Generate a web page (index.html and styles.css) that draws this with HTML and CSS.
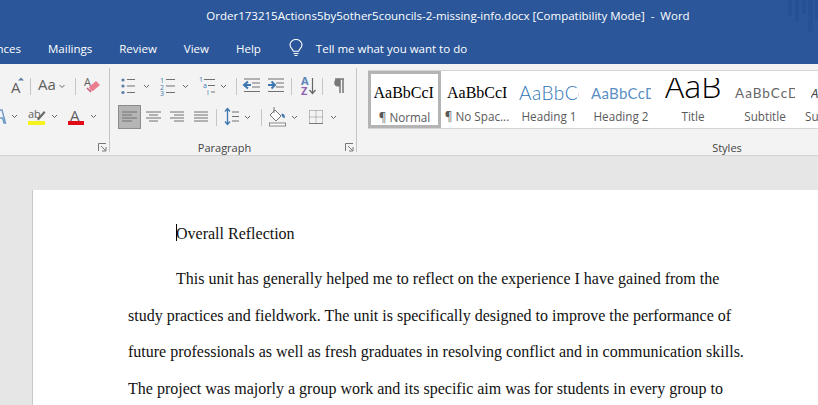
FILE: index.html
```html
<!DOCTYPE html>
<html lang="en">
<head>
<meta charset="utf-8">
<title>Word</title>
<link rel="stylesheet" href="styles.css">
</head>
<body>
<header class="titlebar">
  <div class="doc-title">Order173215Actions5by5other5councils-2-missing-info.docx [Compatibility Mode]&nbsp; - &nbsp;Word</div>
  <svg class="decor" width="30" height="34" viewBox="0 0 30 34"><g fill="#1f4a88" opacity=".35"><rect x="0" y="0" width="4" height="16"/><rect x="7" y="0" width="4" height="22"/><rect x="14" y="0" width="4" height="14"/><rect x="20" y="0" width="5" height="32"/><rect x="27" y="0" width="3" height="20"/></g></svg>
</header>
<nav class="tabs">
  <span class="tab tab-clipped"><span>References</span></span>
  <span class="tab">Mailings</span>
  <span class="tab">Review</span>
  <span class="tab">View</span>
  <span class="tab">Help</span>
  <span class="tell">
    <svg width="14" height="18" viewBox="0 0 14 18" fill="none" stroke="#fff" stroke-width="1.1"><path d="M4.2 12.2C4 9.8 1 9 1 5.8a6 5.3 0 0 1 12 0c0 3.200-3 4-3.200 6.400z"/><path d="M4.500 14.500h5M5.500 16.500h3"/></svg>
    <span>Tell me what you want to do</span>
  </span>
</nav>
<section class="ribbon">
  <div class="group group-font">
    <div class="rows">
      <div class="row">
        <svg class="tool" width="30" height="24" viewBox="0 0 30 24"><text x="11" y="19" class="ico-a" font-size="15">A</text><path d="M18 6.500l3-3 3 3z" fill="#5b7fa6"/></svg>
        <i class="sep"></i>
        <svg class="tool" width="44" height="24" viewBox="0 0 44 24"><text x="7" y="16" class="ico-a" font-size="15">Aa</text><path d="M28.500 11l2.500 2.500 2.500-2.500" class="chev"/></svg>
        <i class="sep"></i>
        <svg class="tool" width="33" height="24" viewBox="0 0 33 24"><text x="8" y="12" class="ico-a" font-size="11">A</text><path d="M13 13l7-6 4 4-7 6-2.500-.5z" fill="#ea7d90"/><path d="M11 14l4 4" stroke="#c9596e" stroke-width="1.500"/></svg>
      </div>
      <div class="row">
        <svg class="tool" width="22" height="24" viewBox="0 0 22 24"><path d="M0 5h2l3.500 13H4L2.500 13H-1" fill="none" stroke="#6f9ac8" stroke-width="1.400"/><path d="M12 10l2.500 2.500 2.500-2.500" class="chev"/></svg>
        <svg class="tool" width="40" height="24" viewBox="0 0 40 24"><text x="6" y="13" class="ico-a" font-size="11">ab</text><path d="M15 14l7-8 1.500 1.500-7 8z" fill="#666"/><rect x="6" y="16" width="17" height="4" fill="#f6f21e"/><path d="M30 10l2.500 2.500 2.500-2.500" class="chev"/></svg>
        <svg class="tool" width="47" height="24" viewBox="0 0 47 24"><text x="8" y="16" class="ico-a" font-size="15">A</text><rect x="6" y="16" width="16" height="4" fill="#e00b16"/><path d="M29 10l2.500 2.500 2.500-2.500" class="chev"/></svg>
      </div>
    </div>
    <div class="foot">
      <span class="label"></span>
      <svg class="launch" width="9" height="9" viewBox="0 0 9 9"><path d="M.5 8V.5H8M3 3l4.500 4.500M4 8h4V4" fill="none" stroke="#777"/></svg>
    </div>
  </div>
  <div class="group group-para">
    <div class="rows">
      <div class="row">
        <svg class="tool" width="43" height="24" viewBox="0 0 43 24"><g fill="#5b7fa6"><circle cx="13" cy="6" r="1.600"/><circle cx="13" cy="12" r="1.600"/><circle cx="13" cy="18.500" r="1.600"/></g><path d="M17 5.500h8M17 12h8M17 18.500h8" class="line"/><path d="M34 11l2.500 2.500 2.500-2.500" class="chev"/></svg>
        <svg class="tool" width="39" height="24" viewBox="0 0 39 24"><g class="nums"><text x="7" y="9">1</text><text x="7" y="15.500">2</text><text x="7" y="22">3</text></g><path d="M13 5.500h9M13 12h9M13 18.500h9" class="line"/><path d="M30 11l2.500 2.500 2.500-2.500" class="chev"/></svg>
        <svg class="tool" width="44" height="24" viewBox="0 0 44 24"><g class="nums"><text x="7" y="8">1</text><text x="11" y="14">a</text><text x="15" y="21">i</text></g><path d="M12 5.500h11M16 11.500h7M19 18h4" class="line"/><path d="M29 11l2.500 2.500 2.500-2.500" class="chev"/></svg>
        <i class="sep"></i>
        <svg class="tool" width="27" height="24" viewBox="0 0 27 24"><path d="M7 5h16M15 9h8M15 13h8M7 17.500h16" class="line"/><path d="M7 11h7M11 7.500L7 11l4 3.500" fill="none" stroke="#3f78b0" stroke-width="2"/></svg>
        <svg class="tool" width="27" height="24" viewBox="0 0 27 24"><path d="M4 5h16M12 9h8M12 13h8M4 17.500h16" class="line"/><path d="M4 11h7M7.500 7.500L11 11l-3.500 3.500" fill="none" stroke="#3f78b0" stroke-width="2"/></svg>
        <i class="sep"></i>
        <svg class="tool" width="30" height="24" viewBox="0 0 30 24"><text x="9" y="11" class="az az-a">A</text><text x="9" y="21" class="az az-z">Z</text><path d="M20.500 4v15M17.500 16l3 3.500 3-3.500" fill="none" stroke="#666" stroke-width="1.200"/></svg>
        <i class="sep"></i>
        <svg class="tool" width="33" height="24" viewBox="0 0 33 24"><path d="M12 5h9M17 5v14M20 5v14" fill="none" stroke="#777" stroke-width="1.500"/><path d="M15 5a3.500 3.500 0 0 0 0 7.500h2V5z" fill="#777"/></svg>
      </div>
      <div class="row row-align">
        <svg class="tool tool-on" width="23" height="24" viewBox="0 0 23 24"><path d="M4 7h15M4 10h10M4 13h15M4 16h10" class="line"/></svg>
        <svg class="tool" width="24" height="24" viewBox="0 0 24 24"><path d="M5 7h15M8 10h9M5 13h15M8 16h9" class="line"/></svg>
        <svg class="tool" width="24" height="24" viewBox="0 0 24 24"><path d="M5 7h14M9 10h10M5 13h14M9 16h10" class="line"/></svg>
        <svg class="tool" width="27" height="24" viewBox="0 0 27 24"><path d="M5 7h14M5 10h14M5 13h14M5 16h14" class="line"/></svg>
        <i class="sep"></i>
        <svg class="tool" width="44" height="24" viewBox="0 0 44 24"><path d="M10.500 4v15M8 6.500l2.500-3 2.500 3M8 16.500l2.500 3 2.500-3" fill="none" stroke="#3f78b0" stroke-width="1.300"/><path d="M15 7h7M15 11.500h7M15 16h7" class="line"/><path d="M28 11l2.500 2.500 2.500-2.500" class="chev"/></svg>
        <i class="sep"></i>
        <svg class="tool" width="41" height="24" viewBox="0 0 41 24"><path d="M8 10l5-5 6 6-5 5z" fill="#fff" stroke="#777"/><path d="M12 2v6" stroke="#777"/><path d="M19.500 9c2-1 3.500 1 3.500 4-2 0-3.500-1.500-3.500-4z" fill="#3f78b0"/><rect x="7.500" y="18" width="16" height="3" fill="#fff" stroke="#888"/><path d="M30 11l2.500 2.500 2.500-2.500" class="chev"/></svg>
        <svg class="tool" width="42" height="24" viewBox="0 0 42 24"><path d="M6.500 5.500h13M6.500 5.500v13M19.500 5.500v13M13 5.500v13M6.500 12h13" fill="none" stroke="#888" stroke-dasharray="1 1"/><path d="M6 18.500h14" stroke="#777"/><path d="M28 11l2.500 2.500 2.500-2.500" class="chev"/></svg>
      </div>
    </div>
    <div class="foot">
      <span class="label label-para">Paragraph</span>
      <svg class="launch" width="9" height="9" viewBox="0 0 9 9"><path d="M.5 8V.5H8M3 3l4.500 4.500M4 8h4V4" fill="none" stroke="#777"/></svg>
    </div>
  </div>
  <div class="group group-styles">
    <div class="gallery">
      <div class="style style-on"><span class="pv pv-serif">AaBbCcI</span><span class="st-label">¶ Normal</span></div>
      <div class="style"><span class="pv pv-serif">AaBbCcI</span><span class="st-label">¶ No Spac...</span></div>
      <div class="style"><span class="pv pv-h1">AaBbCcI</span><span class="st-label">Heading 1</span></div>
      <div class="style"><span class="pv pv-h2">AaBbCcD</span><span class="st-label">Heading 2</span></div>
      <div class="style"><span class="pv pv-title">AaB</span><span class="st-label">Title</span></div>
      <div class="style"><span class="pv pv-sub">AaBbCcD</span><span class="st-label">Subtitle</span></div>
      <div class="style"><span class="pv pv-sub2">AaBbCcD</span><span class="st-label">Subtle Em...</span></div>
    </div>
    <div class="foot">
      <span class="label">Styles</span>
    </div>
  </div>
</section>
<main class="workspace">
  <article class="page">
    <p class="heading"><i class="caret"></i>Overall Reflection</p>
    <p class="body-text"><span class="indent"></span>This unit has generally helped me to reflect on the experience I have gained from the<br>study practices and fieldwork. The unit is specifically designed to improve the performance of<br>future professionals as well as fresh graduates in resolving conflict and in communication skills.<br>The project was majorly a group work and its specific aim was for students in every group to</p>
  </article>
</main>
</body>
</html>
```
FILE: styles.css
```css
* { box-sizing: border-box; }
html, body { margin: 0; height: 405px; overflow: hidden; }
body { width: 818px; font-family: "Open Sans", "Noto Sans", sans-serif; background: #e6e6e6; display: flex; flex-direction: column; }

.titlebar { position: relative; flex: none; height: 34px; background: #2b579a; color: #fff; display: flex; justify-content: center; padding: 6px 0 0 78px; font-size: 11.5px; line-height: 20px; white-space: nowrap; }
.decor { position: absolute; right: 0; top: 0; }

.tabs { flex: none; height: 30px; background: #2b579a; color: #fff; display: flex; align-items: center; gap: 27px; font-size: 11.5px; padding-bottom: 2px; white-space: nowrap; }
.tab-clipped { width: 21px; display: flex; justify-content: flex-end; overflow: hidden; flex: none; }
.tab-clipped span { flex: none; }
.tell { display: flex; align-items: center; gap: 13px; margin-left: 1px; }

.ribbon { flex: none; height: 92px; background: #f3f3f3; border-bottom: 1px solid #d2d2d2; display: flex; align-items: flex-start; overflow: hidden; padding-top: 4px; }
.group { height: 84px; display: flex; flex-direction: column; border-right: 1px solid #c6c6c6; flex: none; }
.group-font { width: 110px; }
.group-para { width: 247px; }
.group-styles { width: 740px; border-right: 0; }
.rows { height: 61px; padding-top: 6px; display: flex; flex-direction: column; gap: 7px; }
.row { display: flex; align-items: center; height: 24px; }
.row-align { padding-left: 8px; }
.sep { flex: none; width: 1px; height: 17px; background: #c6c6c6; }
.tool { flex: none; display: block; }
.tool-on { background: #b5b5b5; outline: 1px solid #8c8c8c; outline-offset: -1px; }
.ico-a { fill: #5f5f5f; font-family: "Open Sans", sans-serif; }
.chev { fill: none; stroke: #666; stroke-width: 1; }
.line { fill: none; stroke: #707070; stroke-width: 1; }
.nums { fill: #3f78b0; font: 7px "Open Sans", sans-serif; }
.az { font: 700 11px "Open Sans", sans-serif; }
.az-a { fill: #5b86b8; }
.az-z { fill: #8f62b0; }

.foot { flex: 1; display: flex; align-items: flex-end; justify-content: center; }
.label { flex: 1; text-align: center; font-size: 11px; line-height: 15px; color: #444; margin-bottom: -3px; }
.label-para { padding-right: 6px; }
.launch { flex: none; margin: 0 2px 0 0; }

.gallery { margin: 2px 0 0 11px; height: 59px; width: 640px; background: #fff; border: 1px solid #d4d4d4; border-right: 0; display: flex; }
.style { flex: none; width: 72px; height: 57px; display: flex; flex-direction: column; align-items: center; overflow: hidden; white-space: nowrap; }
.style-on { border: 3px solid #b4b4b4; margin-left: -1px; width: 73px; }
.pv { height: 37px; line-height: 44px; display: block; overflow: hidden; max-width: 60px; color: #000; }
.style-on .pv { height: 35px; }
.pv-serif { font: 16px/44px "Liberation Serif", serif; }
.style-on .pv-serif { line-height: 38px; margin-right: 2px; }
.pv-h1 { font-family: Lato, sans-serif; font-size: 19px; letter-spacing: .5px; font-weight: 300; color: #2e74b5; }
.pv-h2 { font-family: Lato, sans-serif; font-size: 15px; letter-spacing: .3px; color: #5a90c4; }
.pv-title { font-size: 32px; line-height: 16px; height: 30px; margin-top: 7px; max-width: 56px; font-weight: 300; }
.pv-sub { font-family: Lato, sans-serif; font-size: 13.500px; letter-spacing: 1px; color: #666; }
.pv-sub2 { font-size: 13px; font-style: italic; color: #404040; }
.st-label { font-size: 11.700px; line-height: 16px; color: #5a5a5a; }

.workspace { flex: 1; padding: 34px 0 0 32px; overflow: hidden; }
.page { background: #fff; height: 300px; margin-right: -10px; border-left: 1px solid #c8c8c8; padding: 34px 0 0 95px; font-family: "Liberation Serif", serif; font-size: 16px; color: #111; white-space: nowrap; }
.heading { margin: 0 0 0 48px; line-height: 20px; position: relative; }
.caret { position: absolute; left: 0; top: 0; width: 1px; height: 17px; background: #000; }
.body-text { margin: 17px 0 0; line-height: 36.5px; }
.indent { display: inline-block; width: 48px; }
```
